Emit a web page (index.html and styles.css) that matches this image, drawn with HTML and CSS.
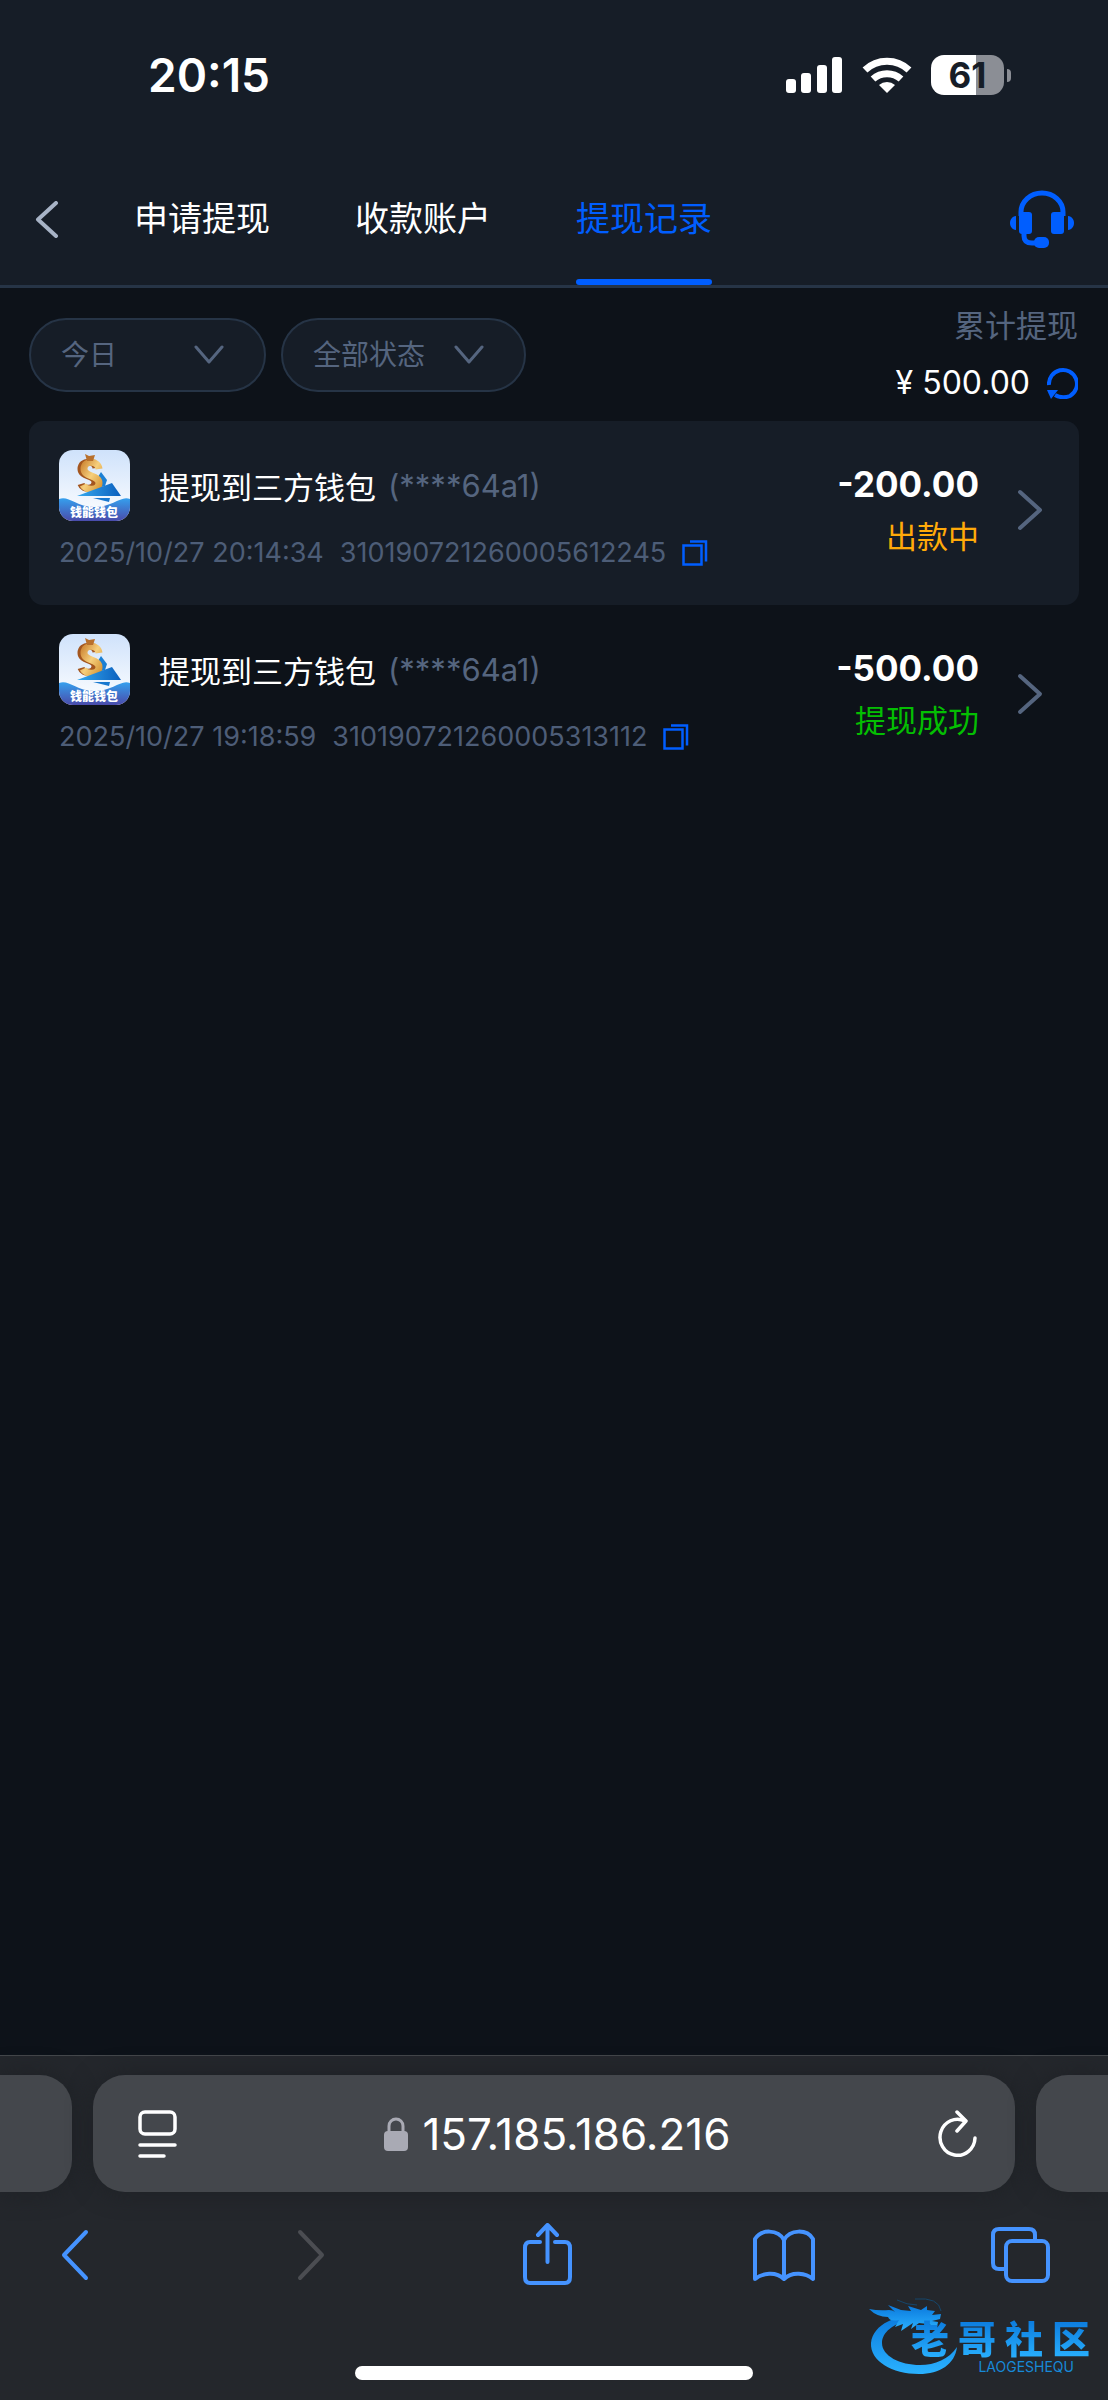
FILE: index.html
```html
<!DOCTYPE html>
<html lang="zh-CN">
<head>
    <meta charset="utf-8">
    <meta name="viewport" content="width=device-width, initial-scale=1">
    <title>提现记录</title>
    <link rel="stylesheet" href="styles.css">
</head>
<body>
    <!-- shared icons -->
    <svg class="sprite" aria-hidden="true">
        <defs>
            <linearGradient id="sky" x1="0" y1="0" x2="0" y2="1">
                <stop offset="0" stop-color="#cfe2fb"/>
                <stop offset="1" stop-color="#ffffff"/>
            </linearGradient>
            <linearGradient id="wave" x1="0" y1="0" x2="0" y2="1">
                <stop offset="0" stop-color="#35a0ee"/>
                <stop offset="1" stop-color="#4a4bab"/>
            </linearGradient>
            <linearGradient id="gold" x1="0" y1="0" x2="1" y2="1">
                <stop offset="0" stop-color="#d08a38"/>
                <stop offset="0.5" stop-color="#f6cf7c"/>
                <stop offset="1" stop-color="#d99a3c"/>
            </linearGradient>
            <linearGradient id="plane" x1="0" y1="0" x2="1" y2="0">
                <stop offset="0" stop-color="#35a9ee"/>
                <stop offset="1" stop-color="#0b5fbe"/>
            </linearGradient>
            <linearGradient id="dragon" x1="0" y1="0" x2="0" y2="1">
                <stop offset="0" stop-color="#0a78dc"/>
                <stop offset="1" stop-color="#2ab2ff"/>
            </linearGradient>
        </defs>
        <symbol id="wallet" viewBox="0 0 71 71">
            <rect width="71" height="71" rx="14" fill="url(#sky)"/>
            <path d="M42 22l6 8-2 6-16 5z" fill="#1a7fd4"/>
            <path d="M37 18c-1-8-15-8-15 1 0 8 14 6 14 13 0 8-12 8-14 2" fill="none" stroke="#a4561f" stroke-width="7"/>
            <path d="M40 19c-1-9-15-9-15 0 0 8 15 6 15 14 0 8-13 8-16 2" fill="none" stroke="url(#gold)" stroke-width="7"/>
            <path d="M26 4l4 2 6-1-2 6h-6z" fill="#b8702c"/>
            <path d="M18 46l35-13 9 13z" fill="url(#plane)"/>
            <path d="M34 48h17l-1 4z" fill="#1878cf"/>
            <path d="M0 49c9-4 16 7 35 8 19 0 27-12 36-8v8a14 14 0 0 1-14 14H14A14 14 0 0 1 0 57z" fill="url(#wave)"/>
        </symbol>
        <symbol id="copy" viewBox="0 0 26 26">
            <path d="M1.5 5.500h18v19h-18zM8 1.500h16v20" fill="none" stroke="#005eff" stroke-width="2.500"/>
        </symbol>
        <symbol id="down" viewBox="0 0 30 20">
            <path d="M2 2l13 15L28 2" fill="none" stroke="#55657f" stroke-width="3" stroke-linecap="round" stroke-linejoin="round"/>
        </symbol>
        <symbol id="more" viewBox="0 0 26 42">
            <path d="M3 3l20 18L3 39" fill="none" stroke="#55657f" stroke-width="4" stroke-linecap="round" stroke-linejoin="round"/>
        </symbol>
    </svg>

    <header class="header">
        <div class="status-bar">
            <time class="clock">20:15</time>
            <div class="status-icons">
                <svg width="57" height="37" viewBox="0 0 57 37" fill="#fff">
                    <rect x="0" y="22" width="10" height="14" rx="3"/>
                    <rect x="15" y="16" width="10" height="20" rx="3"/>
                    <rect x="31" y="8" width="10" height="28" rx="3"/>
                    <rect x="46" y="0" width="10" height="36" rx="3"/>
                </svg>
                <svg width="50" height="37" viewBox="0 0 50 37">
                    <path d="M3 13a32 32 0 0 1 44 0M11 22a21 21 0 0 1 28 0" fill="none" stroke="#fff" stroke-width="7"/>
                    <path d="M25 36l-8-8a12 12 0 0 1 16 0z" fill="#fff"/>
                </svg>
                <div class="battery"><span class="battery-level">61</span></div>
            </div>
        </div>
        <nav class="nav">
            <a class="back" href="#" aria-label="返回">
                <svg width="24" height="37" viewBox="0 0 24 37"><path d="M21 2L3 18.500 21 35" fill="none" stroke="#a7b3c6" stroke-width="4" stroke-linecap="round" stroke-linejoin="round"/></svg>
            </a>
            <div class="tabs">
                <a class="tab" href="#">申请提现</a>
                <a class="tab" href="#">收款账户</a>
                <a class="tab active" href="#" aria-current="page">提现记录</a>
            </div>
            <a class="service" href="#" aria-label="客服">
                <svg width="64" height="58" viewBox="0 0 64 58" fill="#005eff">
                    <path d="M11 26v-4a21 19 0 0 1 42 0v4M14 42v4q0 7 8 7h6" fill="none" stroke="#005eff" stroke-width="5"/>
                    <rect x="9" y="22" width="13" height="22" rx="3"/>
                    <rect x="41" y="22" width="13" height="22" rx="3"/>
                    <path d="M6 26v14c-8-1-8-13 0-14zM58 26v14c8-1 8-13 0-14z"/>
                    <rect x="24" y="47" width="15" height="11" rx="5"/>
                </svg>
            </a>
        </nav>
    </header>

    <main class="content">
        <div class="filter-bar">
            <label class="filter">
                <select aria-label="日期"><option>今日</option></select>
                <svg width="30" height="20"><use href="#down"/></svg>
            </label>
            <label class="filter wide">
                <select aria-label="状态"><option>全部状态</option></select>
                <svg width="30" height="20"><use href="#down"/></svg>
            </label>
            <div class="total">
                <div class="total-label">累计提现</div>
                <div class="total-value">
                    <span>¥ 500.00</span>
                    <button class="icon-btn" aria-label="刷新">
                        <svg width="31" height="32" viewBox="0 0 31 32">
                            <path d="M2 18a14 14 0 1 1 21 11q-8 3-15-1" fill="none" stroke="#005eff" stroke-width="4"/>
                            <path d="M0 23h11L4 32z" fill="#005eff"/>
                        </svg>
                    </button>
                </div>
            </div>
        </div>

        <article class="record">
            <div class="record-info">
                <div class="record-title">
                    <svg width="71" height="71">
                        <use href="#wallet"/>
                        <text x="35" y="67" text-anchor="middle" class="wallet-name">钱能钱包</text>
                    </svg>
                    <h2>提现到三方钱包</h2>
                    <span class="account">(****64a1)</span>
                </div>
                <div class="record-meta">
                    <time>2025/10/27 20:14:34</time>
                    <span>310190721260005612245</span>
                    <button class="icon-btn" aria-label="复制"><svg width="26" height="26"><use href="#copy"/></svg></button>
                </div>
            </div>
            <div class="record-result">
                <div class="amount">-200.00</div>
                <div class="state pending">出款中</div>
            </div>
            <svg width="26" height="42"><use href="#more"/></svg>
        </article>

        <article class="record plain">
            <div class="record-info">
                <div class="record-title">
                    <svg width="71" height="71">
                        <use href="#wallet"/>
                        <text x="35" y="67" text-anchor="middle" class="wallet-name">钱能钱包</text>
                    </svg>
                    <h2>提现到三方钱包</h2>
                    <span class="account">(****64a1)</span>
                </div>
                <div class="record-meta">
                    <time>2025/10/27 19:18:59</time>
                    <span>310190721260005313112</span>
                    <button class="icon-btn" aria-label="复制"><svg width="26" height="26"><use href="#copy"/></svg></button>
                </div>
            </div>
            <div class="record-result">
                <div class="amount">-500.00</div>
                <div class="state success">提现成功</div>
            </div>
            <svg width="26" height="42"><use href="#more"/></svg>
        </article>
    </main>

    <footer class="browser">
        <div class="address-row">
            <div class="side-tab left"></div>
            <div class="address">
                <button class="icon-btn" aria-label="页面设置">
                    <svg width="39" height="48" viewBox="0 0 39 48" fill="none" stroke="#fff" stroke-width="3.500" stroke-linecap="round">
                        <rect x="2" y="2" width="35" height="22" rx="5"/>
                        <path d="M2 35h35M2 46h24"/>
                    </svg>
                </button>
                <label class="address-text">
                    <svg width="24" height="34" viewBox="0 0 24 34">
                        <rect x="0" y="14" width="24" height="20" rx="4" fill="#a9aab4"/>
                        <path d="M5 15V9a7 7 0 0 1 14 0v6" fill="none" stroke="#a9aab4" stroke-width="3"/>
                    </svg>
                    <input type="text" value="157.185.186.216" aria-label="网址">
                </label>
                <button class="icon-btn" aria-label="重新载入">
                    <svg width="39" height="48" viewBox="0 0 39 48" fill="none" stroke="#fff" stroke-width="3.500" stroke-linecap="round" stroke-linejoin="round">
                        <path d="M37 28A17.500 18 0 1 1 27 11"/>
                        <path d="M19 2l9 9-9 10"/>
                    </svg>
                </button>
            </div>
            <div class="side-tab right"></div>
        </div>
        <div class="toolbar">
            <button class="icon-btn" aria-label="后退"><svg width="28" height="62" viewBox="0 0 28 62"><path d="M25 9L3 32l22 23" /></svg></button>
            <button class="icon-btn" aria-label="前进" disabled><svg width="28" height="62" viewBox="0 0 28 62"><path d="M3 9l22 23L3 55"/></svg></button>
            <button class="icon-btn" aria-label="分享">
                <svg width="49" height="62" viewBox="0 0 49 62"><path d="M17 19H7q-5 0-5 6v29q0 6 5 6h35q5 0 5-6V25q0-6-5-6H32M24.500 39V2M15 12l9.500-10L34 12"/></svg>
            </button>
            <button class="icon-btn" aria-label="书签">
                <svg width="62" height="62" viewBox="0 0 62 62"><path d="M31 17v38M31 17C25 6 8 6 2 16v40c7-6 21-8 29 0 8-8 22-6 29 0V16C54 6 37 6 31 17"/></svg>
            </button>
            <button class="icon-btn" aria-label="标签页">
                <svg width="59" height="62" viewBox="0 0 59 62"><rect x="15" y="18" width="42" height="40" rx="6"/><path d="M14 46H8q-6 0-6-6V12q0-6 6-6h30q6 0 6 6v5"/></svg>
            </button>
        </div>
        <div class="home-indicator"></div>

        <div class="brand">
            <svg class="brand-dragon" width="92" height="78" viewBox="0 0 92 78">
                <path d="M54 16C28 16 4 26 2 45c-1 18 21 31 48 31 21 0 36-10 38-27-8 12-22 18-37 18-20 0-38-9-38-22 0-11 12-19 25-23z" fill="url(#dragon)"/>
                <path d="M0 11q10 2 20 1 4 0 6 2l-7-7 13 5 10 1-3-5 13 4 6-4v4l8 1-3 4 9-1-1 5-8 2 6 1-1 5-9-3-9-1-8 6 2-6-12 8 2-7-8 3 4-7q-9 2-11-3Q8 19 0 11z" fill="url(#dragon)"/>
                <path d="M28 2q10 5 20 5M46 1q24-2 26 12" fill="none" stroke="#15466b" stroke-width="1"/>
            </svg>
            <div class="brand-words">
                <div class="brand-name"><span>老</span><span>哥</span><span>社</span><span>区</span></div>
                <div class="brand-sub">LAOGESHEQU</div>
            </div>
        </div>
    </footer>
</body>
</html>
```
FILE: styles.css
```css
* {
    box-sizing: border-box;
}
body {
    margin: 0;
    min-height: 100vh;
    display: flex;
    flex-direction: column;
    background: #0d1219;
    color: #fff;
    font-family: Inter, "Noto Sans CJK SC", sans-serif;
    font-size: 31px;
}
a {
    color: inherit;
    text-decoration: none;
}
svg {
    display: block;
    flex: none;
}
.sprite {
    position: absolute;
    width: 0;
    height: 0;
}
.wallet-name {
    font-family: "Noto Sans CJK SC", sans-serif;
    font-size: 12px;
    font-weight: 900;
    fill: #fff;
}
.icon-btn {
    padding: 0;
    border: none;
    background: none;
    cursor: pointer;
}

/* header */
.header {
    background: #161d27;
    border-bottom: 3px solid #263446;
}
.status-bar {
    display: flex;
    justify-content: space-between;
    align-items: center;
    height: 150px;
    padding: 0 97px 0 148px;
}
.clock {
    font-size: 46px;
    font-weight: 600;
}
.status-icons {
    display: flex;
    align-items: center;
    gap: 19px;
}
.battery {
    position: relative;
    width: 73px;
    height: 40px;
    margin-right: 7px;
    border-radius: 13px;
    background: linear-gradient(to right, #fff 61%, #8b8e95 61%);
    color: #161d27;
    font-size: 35px;
    font-weight: 700;
    line-height: 40px;
    text-align: center;
}
.battery::after {
    content: "";
    position: absolute;
    right: -7px;
    top: 14px;
    width: 4px;
    height: 13px;
    border-radius: 0 4px 4px 0;
    background: #8b8e95;
}
.nav {
    display: flex;
    align-items: center;
    height: 135px;
    padding: 3px 34px 0 35px;
}
.tabs {
    display: flex;
    align-self: stretch;
    gap: 85px;
    margin-left: 75px;
}
.tab {
    position: relative;
    display: flex;
    align-items: center;
    border-bottom: 6px solid transparent;
    font-size: 34px;
}
.tab.active {
    color: #005eff;
}
.tab.active::after {
    content: "";
    position: absolute;
    left: 0;
    right: 0;
    bottom: -6px;
    height: 6px;
    border-radius: 3px;
    background: #005eff;
}
.service {
    margin-left: auto;
}

/* filters */
.content {
    flex: 1;
}
.filter-bar {
    display: flex;
    align-items: center;
    gap: 15px;
    padding: 16px 30px 16px 29px;
}
.filter {
    display: flex;
    align-items: center;
    width: 237px;
    height: 74px;
    padding: 0 40px 0 30px;
    border: 2px solid #263446;
    border-radius: 37px;
    background: #161d27;
}
.filter.wide {
    width: 245px;
}
.filter select {
    flex: 1;
    min-width: 0;
    padding: 0;
    border: none;
    appearance: none;
    background: none;
    color: #55657f;
    font: inherit;
    font-size: 28px;
}
.total {
    margin-left: auto;
    line-height: 44px;
    text-align: right;
}
.total-label {
    margin-bottom: 13px;
    color: #55657f;
}
.total-value {
    display: flex;
    justify-content: flex-end;
    align-items: center;
    gap: 17px;
    font-size: 32px;
}

/* records */
.record {
    display: flex;
    align-items: center;
    margin: 0 29px;
    padding: 29px 36px 35px 30px;
    border-radius: 14px;
    background: #161d27;
}
.record.plain {
    background: none;
}
.record-info {
    flex: 1;
}
.record-title {
    display: flex;
    align-items: center;
    margin-bottom: 14px;
}
.record-title h2 {
    margin: 0 12px 0 29px;
    font-size: 31px;
    font-weight: 400;
}
.account {
    color: #55657f;
}
.record-meta {
    display: flex;
    align-items: center;
    gap: 16px;
    color: #4d5d77;
    font-size: 27px;
    line-height: 35px;
}
.record-result {
    margin-right: 38px;
    line-height: 44px;
    text-align: right;
}
.amount {
    margin-bottom: 9px;
    font-size: 35px;
    font-weight: 700;
}
.pending {
    color: #ffaa09;
}
.success {
    color: #04be02;
}

/* browser bars */
.browser {
    position: relative;
    padding-top: 19px;
    border-top: 1px solid #44474b;
    background: #24272c;
}
.address-row {
    display: flex;
    gap: 21px;
    height: 117px;
}
.side-tab,
.address {
    background: #44474c;
    box-shadow: 0 0 24px #1e2125;
}
.side-tab {
    width: 72px;
}
.side-tab.left {
    border-radius: 0 32px 32px 0;
}
.side-tab.right {
    border-radius: 32px 0 0 32px;
}
.address {
    flex: 1;
    display: flex;
    justify-content: space-between;
    align-items: center;
    padding: 0 38px 0 45px;
    border-radius: 32px;
}
.address-text {
    display: flex;
    align-items: center;
    gap: 14px;
}
.address-text input {
    field-sizing: content;
    padding: 0;
    border: none;
    outline: none;
    background: none;
    color: #fff;
    font: inherit;
    font-size: 44px;
}
.toolbar {
    display: flex;
    justify-content: space-between;
    padding: 31px 57px 0 44px;
}
.toolbar button {
    display: flex;
    justify-content: center;
    width: 62px;
}
.toolbar svg {
    fill: none;
    stroke: #4593ff;
    stroke-width: 4;
    stroke-linecap: round;
    stroke-linejoin: round;
}
.toolbar button:disabled svg {
    stroke: #4b4d52;
}
.home-indicator {
    width: 36%;
    height: 14px;
    margin: 81px auto 20px;
    border-radius: 7px;
    background: #fff;
}
.brand {
    position: absolute;
    right: 18px;
    bottom: 24px;
    display: flex;
}
.brand-dragon {
    margin-right: -50px;
}
.brand-words {
    width: 179px;
    padding-top: 20px;
}
.brand-name {
    display: flex;
    justify-content: space-between;
    background: linear-gradient(#0a78dc, #2ab2ff);
    background-clip: text;
    color: transparent;
    font-size: 38px;
    font-weight: 900;
    line-height: 42px;
}
.brand-sub {
    padding-right: 16px;
    color: #1789d8;
    font-size: 14px;
    line-height: 14px;
    text-align: right;
}
```
